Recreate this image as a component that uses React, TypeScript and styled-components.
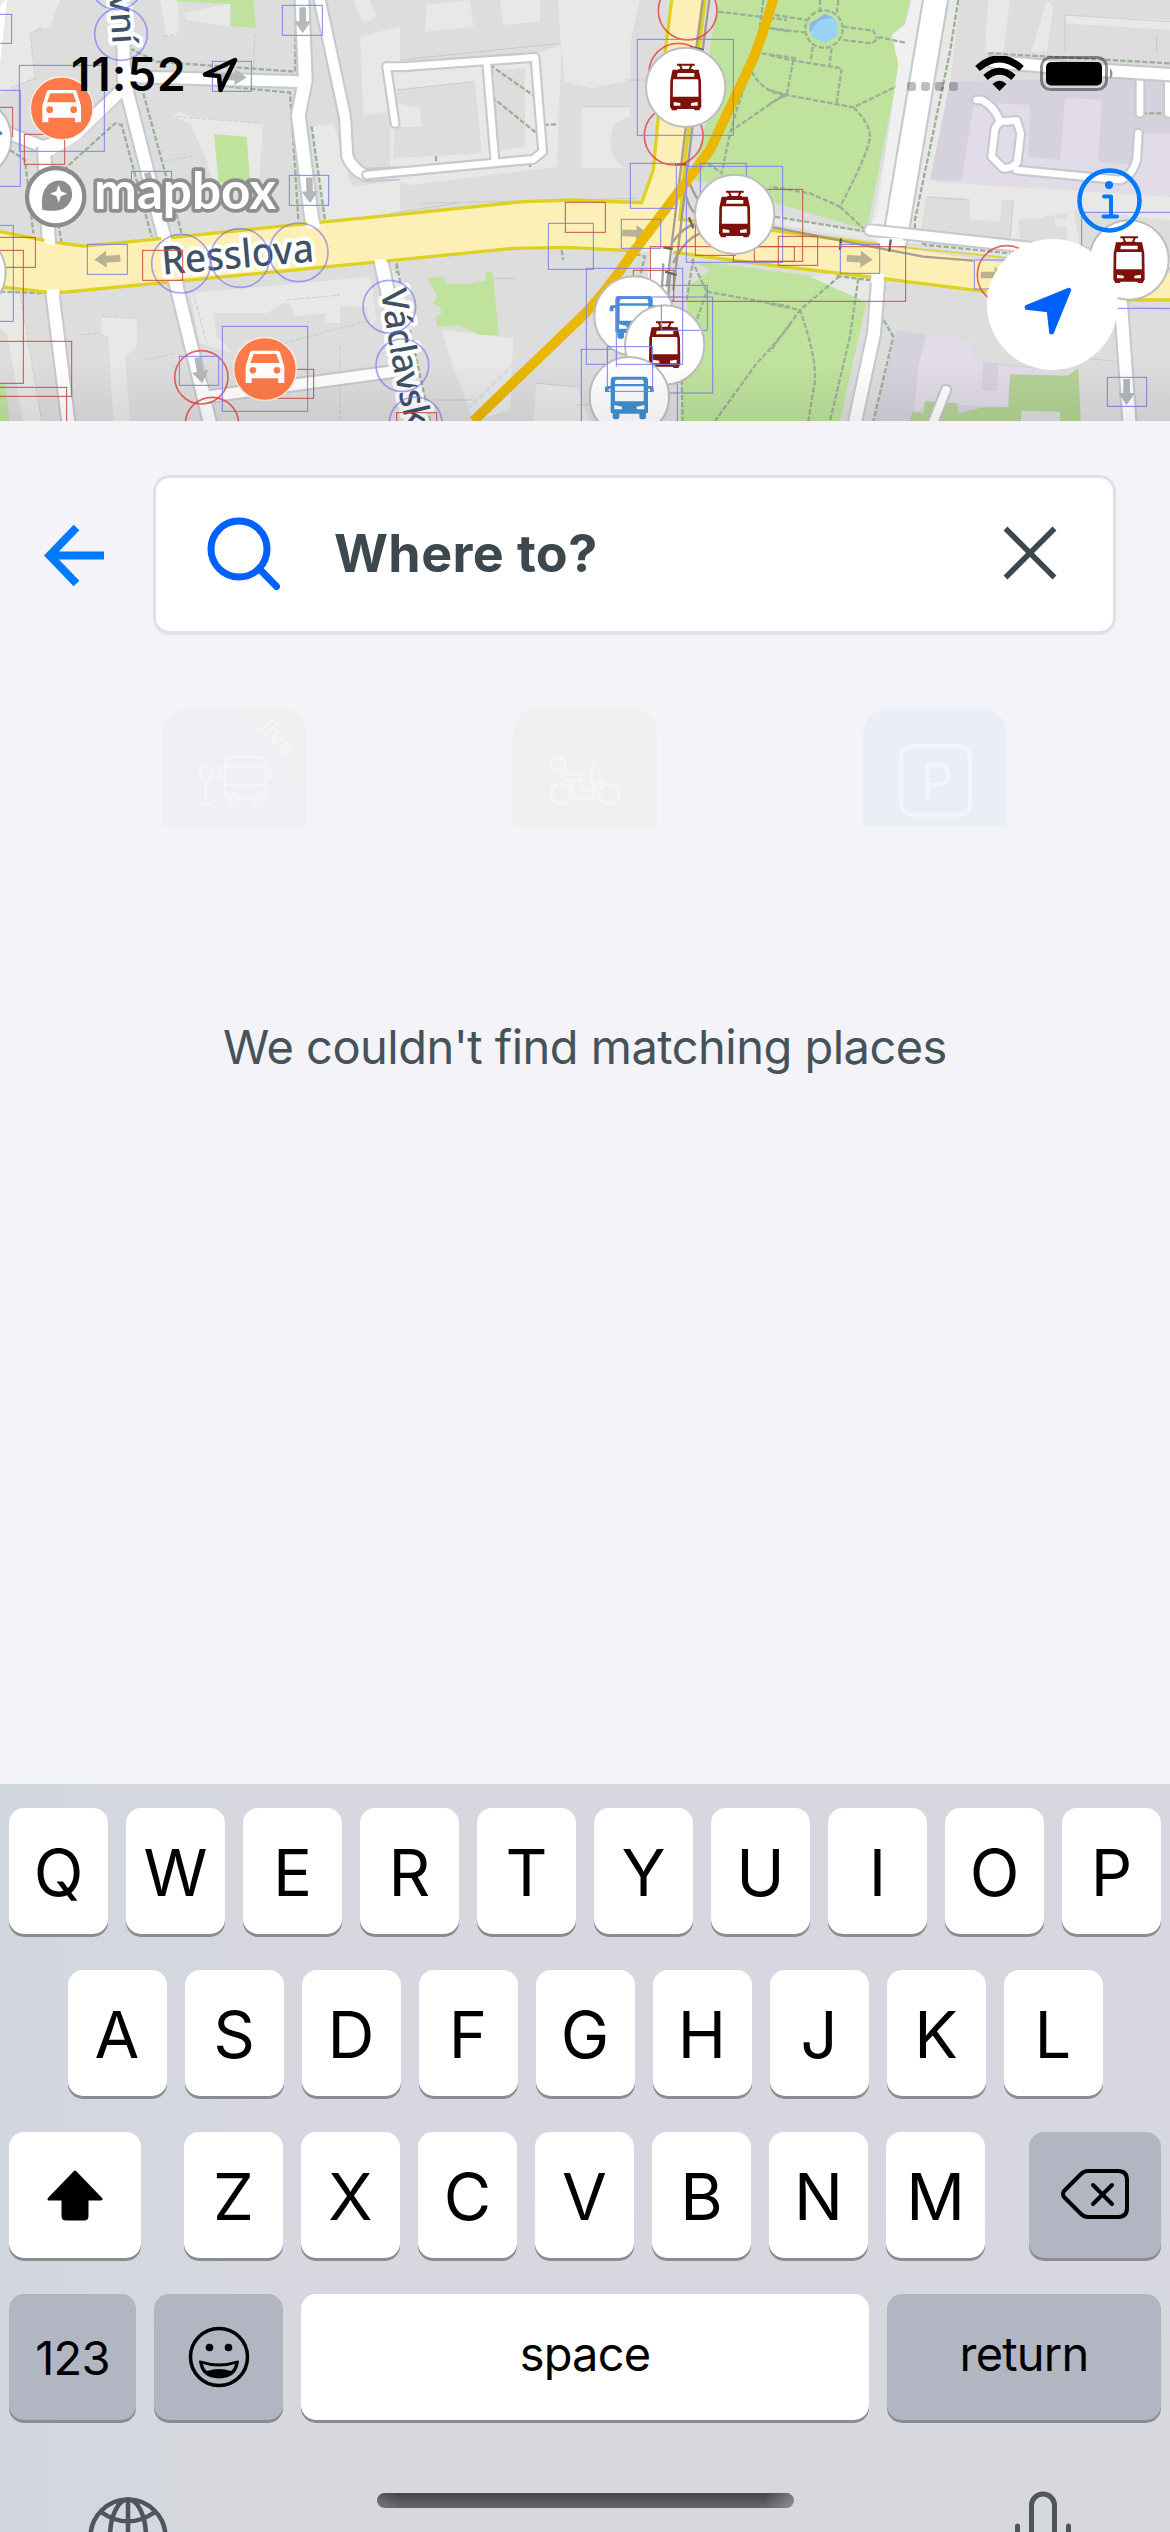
import React from "react";
import styled, { createGlobalStyle } from "styled-components";

const Global = createGlobalStyle`
  * { box-sizing: border-box; }
  html, body { margin: 0; padding: 0; background: #f3f3f8; }
  button { border: 0; padding: 0; margin: 0; background: none; font: inherit; color: inherit; }
  svg { display: block; flex: none; }
`;

const Screen = styled.div`
  width: 1170px;
  height: 2532px;
  overflow: hidden;
  display: flex;
  flex-direction: column;
  background: #f3f3f8;
  font-family: Inter, "Liberation Sans", sans-serif;
`;

/* ---------- Map ---------- */

const MapArea = styled.section`
  position: relative;
  height: 421px;
  flex: none;
  overflow: hidden;
  background: #dddddd;
`;

const StatusBar = styled.header`
  position: absolute;
  inset: 0 0 auto 0;
  height: 148px;
  padding: 0 54px 0 71px;
  display: flex;
  justify-content: space-between;
  align-items: center;
  color: #000;
`;

const StatusGroup = styled.div<{ $gap: number }>`
  display: flex;
  align-items: center;
  gap: ${(p) => p.$gap}px;
`;

const Clock = styled.span`
  font-size: 46px;
  font-weight: 600;
  line-height: 46px;
  letter-spacing: 0.9px;
`;

const Signal = styled.div`
  display: flex;
  gap: 5px;
  margin: 25px 13px 0 0;
`;

const SignalDot = styled.i`
  width: 9px;
  height: 9px;
  border-radius: 3px;
  background: rgba(60, 60, 60, 0.34);
`;

const InfoButton = styled.button`
  position: absolute;
  left: 1077px;
  top: 168px;
`;

const LocateButton = styled.button`
  position: absolute;
  left: 987px;
  top: 239px;
  width: 131px;
  height: 131px;
  border-radius: 50%;
  background: #fff;
  display: flex;
  align-items: center;
  justify-content: center;
`;

type Pt = { x: number; y: number };

const Tram = ({ x, y }: Pt) => (
  <g transform={`translate(${x} ${y})`}>
    <circle r="119" fill="#fff" stroke="#bdbdbd" strokeWidth="6" />
    <g stroke="#7d120b" fill="none" strokeWidth="7">
      <path d="M-26 -68H27M-18 -68L-11 -52M18 -68L11 -52M-22 -52H22" strokeWidth="6" />
      <path d="M-36 -49H36L42 -20L43 55H-43L-42 -20Z" strokeWidth="8" />
    </g>
    <path d="M-37 -52H37L42 -24H-42ZM-45 28H45V62Q45 65 41 65H-41Q-45 65 -45 62Z" fill="#7d120b" />
    <path d="M-24 -43H26V-32H-26Z" fill="#fff" />
    <path d="M-36 44L-16 47V55H-36ZM36 44L16 47V55H36Z" fill="#fff" />
    <path d="M-42 64H-26V69H-42ZM26 64H42V69H26Z" fill="#7d120b" />
  </g>
);

const Bus = ({ x, y }: Pt) => (
  <g transform={`translate(${x} ${y})`}>
    <circle r="119" fill="#fff" stroke="#bdbdbd" strokeWidth="6" />
    <path
      d="M-46 -60H46Q56 -60 56 -49V-32H66Q73 -32 73 -25V-14H62V-24H56V49H50V62Q50 68 43 68H36Q30 68 30 62V51H-30V62Q-30 68 -37 68H-43Q-50 68 -50 62V49H-56V-24H-62V-14H-73V-25Q-73 -32 -66 -32H-56V-49Q-56 -60 -46 -60Z"
      fill="#408fd2"
    />
    <path d="M-36 -51H36Q43 -51 43 -44V-38H-43V-44Q-43 -51 -36 -51ZM-43 -31H43V14H-43ZM-45 25L-22 30V38H-45ZM45 25L22 30V38H45Z" fill="#fff" />
  </g>
);

const Car = ({ x, y }: Pt) => (
  <g transform={`translate(${x} ${y})`}>
    <circle r="94" fill="#ff7a48" stroke="#f7efe9" strokeWidth="4" />
    <path
      d="M-38 -55H38Q43 -55 45 -50L56 -14Q58 -11 58 -6V42H40V28H-40V42H-58V-6Q-58 -11 -56 -14L-45 -50Q-43 -55 -38 -55Z"
      fill="#fff"
    />
    <path d="M-34 -45H34L44 -18H-44Z" fill="#ff7a48" />
    <circle cx="-36" cy="4" r="10" fill="#ff7a48" />
    <circle cx="36" cy="4" r="10" fill="#ff7a48" />
  </g>
);

const Arrow = ({ x, y, r = 0, c = "#b5b8ba" }: Pt & { r?: number; c?: string }) => (
  <path transform={`translate(${x} ${y}) rotate(${r})`} d="M-38 -10H4V-25L40 0L4 25V10H-38Z" fill={c} />
);

const Road = ({ d, w = 26 }: { d: string; w?: number }) => (
  <>
    <path d={d} stroke="#c6cacf" strokeWidth={w + 13} />
    <path d={d} stroke="#fff" strokeWidth={w} />
  </>
);

const Boxes = ({ items, color }: { items: number[][]; color: string }) => (
  <g fill="none" stroke={color} strokeWidth="3">
    {items.map(([x, y, w, h]) => (
      <rect key={`${x}-${y}`} x={x} y={y} width={w} height={h} />
    ))}
  </g>
);

const MID = "translate(1170 0)";
const EAST = "translate(2310 0)";
const LABEL = '"Noto Sans", "Open Sans", sans-serif';

const CityMap = () => (
  <svg width="1170" height="421" viewBox="0 0 3510 1263">
    <defs>
      <linearGradient id="foot" x1="0" y1="0" x2="0" y2="1">
        <stop offset="0" stopColor="#000" stopOpacity="0" />
        <stop offset="1" stopColor="#000" stopOpacity="0.07" />
      </linearGradient>
      <path id="vaclav" d="M1142 872L1170 1050Q1186 1140 1222 1290" />
    </defs>
    <rect width="3510" height="1263" fill="#dddddd" />

    {/* open ground between the buildings */}
    <g fill="#e8e8e6">
      <path d="M0 0H130L120 80L90 100L105 230L30 270L0 280ZM480 0H535V108H500ZM550 40L690 10V80L560 60ZM1060 0H1110L1130 50L1090 70ZM935 380L1000 370L1055 560L1200 540V640L970 660ZM1080 110L1200 80V330L1090 345Z" />
      <path d="M520 350L540 335L570 350L790 370L775 560L640 550L620 480L600 440L570 370ZM130 0H180L150 80L120 90Z" />
      <path d="M305 950L410 955V1040L375 1070L390 1263H340L325 1010L305 1000ZM570 880L1110 830L1130 960L1110 980L1100 920L850 910L800 940L640 940L650 1010L700 1060L600 1030ZM860 895L1020 885V970H975V940L885 948ZM0 870H60L125 1263H70L20 1000L0 985Z" />
      <g transform={MID}>
        <path d="M110 15L240 0L250 80L105 95ZM330 0H450V65L340 75ZM505 0H750L720 130V240L675 250L605 265L525 245L510 100ZM0 195L450 155L515 135L500 500L60 555L0 540ZM575 320H720V350Q660 360 660 430Q670 500 720 505L575 505ZM155 990L370 1015L360 1230L250 1263L190 1100ZM440 1150L560 1160L600 1263H430ZM0 810L30 815L120 1263H60Z" />
      </g>
      <g transform={EAST}>
        <path d="M655 0H720L700 155H645ZM830 0L850 20L830 155H785ZM885 45L1200 60V90L885 70ZM480 540L1200 580V820L700 750L435 720ZM0 640L300 700L430 0H570L480 740L1200 830V790L560 740L290 720L0 670Z" />
      </g>
    </g>
    <g fill="#dddddd">
      <g transform={MID}>
        <path d="M20 270L255 245L275 460L10 475ZM305 210L405 205V440L330 450Z" />
        <path d="M20 310L90 325L95 380L20 380Z" fill="#e8e8e6" />
      </g>
      <g transform={EAST}>
        <path d="M470 590L730 600L720 715L450 700ZM745 660L890 640V740L750 730ZM910 630L1200 660V780L930 740Z" />
        <path d="M600 585L695 595L690 665L600 658ZM780 590L810 585L825 650L790 660L765 645ZM855 655L900 662V682L855 678Z" fill="#e8e8e6" />
      </g>
    </g>
    <g stroke="#bfbfbf" strokeWidth="2" fill="none">
      <path d="M490 110L535 100M765 100L760 210M130 85L90 100L105 235L30 265M530 350L785 370M490 485L590 465M60 880L125 1263M305 950L410 955M240 1005L300 998M435 1080L525 1060M580 880L620 1030M860 900L1020 885M850 1030L1110 960M1020 1040V1263" strokeDasharray="14 5" />
      <path transform={MID} d="M30 180L510 130M20 270L250 245M575 320H720M710 240H770M90 610L740 595M0 640L200 610M130 1200H250M440 1150L560 1160M560 1215H600M310 835H375" />
      <path transform={EAST} d="M885 45L1200 65M885 45V155M470 590L590 600M730 600L720 715M1160 105V160M1090 920L1200 930M900 1070L1040 1085" />
    </g>

    {/* university quarter */}
    <g transform={EAST}>
      <path d="M540 245L1100 230L1200 250V590L480 540Z" fill="#d5d2de" />
      <path d="M615 300L690 310L780 315L775 470L870 480L885 295L995 300L985 485L1095 495V400H1200V590L480 545L575 540L605 350Z" fill="#e1dce7" />
      <path d="M380 990L440 1000L475 1003L610 1025L605 1080L720 1095L900 1110L720 1125V1263H310Z" fill="#d5d2de" />
      <path d="M470 1003L610 1023L605 1075L640 1085L635 1170L680 1172L685 1095L900 1115L720 1123L715 1220L560 1215L465 1205L430 1263L445 1100Z" fill="#e1dce7" />
    </g>

    {/* parks */}
    <g fill="#bfe39d">
      <path d="M530 0H760L768 85L692 78V12L530 4ZM642 402L740 410L751 552L656 548ZM0 1150H15L30 1263H0Z" />
      <g transform={MID}>
        <path d="M985 0H1560L1545 70L1505 105L1530 190L1430 690L940 545L900 540L960 330L960 140Z" />
        <path d="M900 780L1290 830L1430 905L1350 1263H870L895 860L960 810Z" />
        <path d="M112 835L162 830L165 850L240 852L287 840V818L308 816L327 1005H268L205 975L142 982L137 950L155 940L150 920L127 912L143 890Z" />
      </g>
      <g transform={EAST}>
        <path d="M720 1123L893 1127L925 1105L932 1263H870V1235L755 1232L752 1263H418L428 1235L460 1240L467 1203L560 1210L565 1240L640 1222H715Z" fill="#b4d396" />
      </g>
    </g>
    <g transform={EAST}>
      <path d="M425 0L405 75L365 105L385 190L320 650L285 690L330 735L465 0Z" fill="#f0f0f0" />
      <path d="M120 70L165 42L200 60L205 105L165 130L125 110Z" fill="#9ad2f3" />
      <path d="M120 100L118 72L165 42L190 52L150 60L130 80Z" fill="#8cb6ea" />
      <path d="M120 830L285 905L340 840L200 820Z" fill="#e8e8e6" />
    </g>

    {/* footpaths */}
    <g fill="none" stroke="#9bb098" strokeWidth="7" strokeDasharray="16 6">
      <path d="M390 145L470 185L885 215L888 0M430 270L480 240L870 278L880 420L895 660M935 380L975 660M430 280L545 700M30 450L75 480L100 700M190 510L345 370L365 375L455 710M175 670L185 730M0 875L140 880M1190 790V820" />
      <g transform={MID}>
        <path d="M300 195L435 290M305 290L440 400M460 375L502 373M138 468V498M420 485V502M20 790L35 870M60 990L120 1263M515 750L520 780M715 755L765 770L750 830M910 775L890 900M985 35L1190 60M1115 80L1200 95M1115 160L1220 175M1120 0L1100 150L1040 330L1020 400L995 520L940 480M1085 215Q1120 280 1190 285M1020 395L1180 285M905 780L950 875L915 975M950 875L1200 920M1200 975Q1130 1060 1100 1090L975 1263M875 1140L878 1263" />
      </g>
      <g transform={EAST}>
        <path d="M15 45L110 60M5 85L110 98M150 0V35M205 0L200 40M0 165L60 180L215 205L200 310M70 180L50 285L0 310M0 270L50 285L250 322L378 260M250 322Q300 370 300 410Q295 460 210 620L120 580L0 560M210 620L290 695M128 140L122 185M185 145L178 195M220 80L310 92L320 115M220 120L305 130L330 112L405 128" />
        <circle cx="162" cy="87" r="56" />
        <path d="M15 650L290 695M210 828L90 930L0 1055M0 912L90 930Q150 1100 130 1170L115 1263M265 835L240 1010L180 1263M200 828L300 840L345 845L335 950L370 1010L310 1263M565 0L540 155L435 660Q430 725 470 735L720 760M655 160L1200 190M760 210L1200 240M1100 240L1105 340H1200" />
      </g>
    </g>
    <g transform={MID} fill="none" stroke="#d7dde3" strokeWidth="9" strokeDasharray="18 8">
      <path d="M530 750L480 1050M500 880L620 890M530 770H640L720 740M690 780L230 1230M640 840L560 1080M480 1065L570 1072M765 490L740 610" />
    </g>

    {/* side streets */}
    <g fill="none" strokeLinejoin="round">
      <Road w={32} d="M0 390L130 440L220 405L370 265L385 230L905 245" />
      <Road w={36} d="M370 120L372 240L500 740" />
      <Road w={36} d="M132 440L148 760" />
      <path d="M130 425L145 455L225 410L370 270L390 235L372 200" stroke="#fff" strokeWidth="28" />
      <Road w={38} d="M905 -20L916 240L895 345L938 680" />
      <path d="M860 243L912 246" stroke="#fff" strokeWidth="32" />
      <Road w={30} d="M955 -20L1035 350L1042 470Q1060 510 1095 525L1200 520" />
      <Road w={36} d="M155 860L208 1290" />
      <Road w={36} d="M525 840L635 1290" />
      <Road w={32} d="M620 1190L1215 1110" />
      <path d="M602 1150L616 1200" stroke="#fff" strokeWidth="36" />
      <Road w={38} d="M1140 770L1190 1000L1240 1290" />
      <path d="M0 20L22 -10L0 190Z" fill="#fff" />
      <g strokeLinecap="round">
        <Road w={20} d="M1185 370L1160 200H1210L1605 172L1628 455L1600 478L1100 525M1460 185L1485 485" />
      </g>
    </g>
    <g transform={EAST} fill="none" strokeLinejoin="round" strokeLinecap="round">
      <Road w={68} d="M500 -20L375 720" />
      <Road w={36} d="M325 835L312 1000L250 1290" />
      <Road w={36} d="M1050 870L1080 1290" />
      <Road w={20} d="M620 300H635Q675 320 690 365L740 362L752 400L742 485Q730 505 700 505L665 470L675 385L690 365M740 510L1050 540Q1085 530 1100 480L1105 400M1110 340V235M1195 240V340" />
      <Road w={24} d="M528 1170L480 1290" />
      <Road w={34} d="M670 185L900 205L1220 225" />
      <Road w={28} d="M300 690L1220 790" />
    </g>

    {/* Resslova and its northern branch */}
    <path
      d="M0 695L165 727L250 738L370 727L520 712L830 680L1200 643L1570 605L1720 600L1925 608L1960 510L1975 350L1995 160L2015 0H2115L2095 160L2055 480L2040 658L2310 690L2640 735L3010 790L3510 820V905L2960 875L2620 832L2310 795L2020 757L1890 752L1700 742L1540 745L1170 782L520 845L200 876L145 877L0 860Z"
      fill="#fdf0b7"
    />
    <g fill="none" stroke="#dfd11f" strokeWidth="10">
      <path d="M0 695L165 727L250 738L370 727L520 712L830 680L1200 643L1570 605L1720 600L1925 608L1960 510L1975 350L1995 160L2015 0M2115 0L2095 160L2055 480L2040 658L2310 690L2640 735" />
      <path d="M0 860L145 877L200 876L520 845L1170 782L1540 745L1700 742L1890 752M2020 757L2310 795L2620 832L2960 875M3380 900H3510" />
      <path d="M2640 735L3040 775" strokeWidth="4" />
    </g>
    <path d="M133 705H163L166 735L133 728ZM483 700L508 695L514 722L484 724ZM920 660H957L960 682L922 686ZM140 868H178V890H142ZM505 842H548V860H512ZM1122 778H1158L1163 796H1127ZM1950 745L2018 750L1995 900H1940ZM2615 822H2652L2650 850H2612ZM2640 715H2710L2705 740H2638Z" fill="#fff" />

    {/* tram tracks */}
    <g transform={MID} fill="none" stroke="#9a9188" strokeWidth="7" opacity="0.85">
      <path d="M938 0L885 400L830 860M958 0L905 400L850 870M895 540Q910 580 925 600M890 590Q895 620 915 640M845 730Q880 680 915 672M850 790Q880 720 930 700M820 790L815 880M1140 680L1470 745L1600 770L1750 782M840 820L835 890" />
      <path d="M900 140L940 150M855 493H890M897 652L910 685M820 742L848 747M825 815L860 825M1353 715L1350 750M1502 718L1498 755" stroke="#4c4c4c" />
    </g>

    <Arrow x={323} y={777} r={177} c="#b9b18f" />
    <Arrow x={1905} y={700} r={2} c="#b9b18f" />
    <Arrow x={2578} y={777} r={3} c="#b9b18f" />
    <Arrow x={2980} y={825} c="#b9b18f" />
    <Arrow x={700} y={231} r={2} />
    <Arrow x={908} y={60} r={90} />
    <Arrow x={929} y={570} r={88} />
    <Arrow x={450} y={555} r={78} />
    <Arrow x={600} y={1110} r={80} />
    <Arrow x={3380} y={1175} r={90} />

    {/* metro line */}
    <path d="M2322 -10Q2290 100 2258 180L2130 450L1890 770Q1800 900 1730 965L1420 1263" fill="none" stroke="#eab800" strokeWidth="30" />

    {/* street names */}
    <g fontFamily={LABEL} fill="#3f5265" stroke="#fff" strokeWidth="24" strokeLinejoin="round" style={{ paintOrder: "stroke" }} fontWeight="500">
      <text transform="translate(488 824) rotate(-5)" fontSize="118" textLength="458" lengthAdjust="spacingAndGlyphs">Resslova</text>
      <text fontSize="108" letterSpacing="-3"><textPath href="#vaclav">Václavsk</textPath></text>
      <text transform="translate(338 133) rotate(86)" fontSize="104" textAnchor="end">vní</text>
    </g>

    {/* label collision shapes */}
    <g fill="none" stroke="#6e6ef5" strokeOpacity="0.6" strokeWidth="5">
      <circle cx="363" cy="102" r="79" />
      <circle cx="350" cy="-50" r="79" />
      <circle cx="543" cy="791" r="88" />
      <circle cx="720" cy="774" r="88" />
      <circle cx="896" cy="757" r="88" />
      <circle cx="1168" cy="920" r="79" />
      <circle cx="1207" cy="1096" r="79" />
      <circle cx="1247" cy="1270" r="79" />
    </g>
    <g fill="none" stroke="#e93e3e" strokeOpacity="0.8" strokeWidth="5">
      <circle cx="604" cy="1132" r="80" />
      <circle cx="636" cy="1272" r="80" />
      <circle cx="2063" cy="32" r="88" />
      <circle cx="2035" cy="218" r="88" />
      <circle cx="2021" cy="407" r="88" />
      <circle cx="3020" cy="825" r="88" />
    </g>
    <Boxes
      color="#8180ee"
      items={[
        [-10, 43, 45, 87], [-10, 271, 71, 288], [58, 196, 255, 258], [637, 184, 117, 90], [847, 16, 120, 90],
        [394, 514, 121, 90], [868, 526, 118, 90], [262, 733, 120, 90], [-10, 676, 50, 288], [538, 1069, 118, 87], [667, 979, 256, 255],
        [1912, 118, 288, 288], [1891, 490, 138, 135], [2101, 490, 138, 135], [2059, 499, 289, 288], [1645, 670, 135, 138],
        [1864, 658, 118, 87], [1759, 805, 289, 288], [1984, 856, 138, 135], [1849, 891, 289, 288], [1744, 1048, 288, 260],
        [1822, 1040, 136, 134], [2521, 733, 118, 87], [2923, 780, 118, 87], [3245, 637, 290, 288], [3322, 1132, 118, 87],
      ]}
    />
    <Boxes
      color="#c9514f"
      items={[
        [-10, 322, 48, 88], [73, 403, 121, 90], [-10, 712, 116, 90], [-10, 751, 80, 399], [-10, 1024, 225, 165], [-10, 1162, 210, 130],
        [428, 751, 120, 90], [820, 1108, 121, 87], [1190, 1238, 120, 80], [1696, 607, 120, 90], [1900, 811, 121, 90],
        [2086, 676, 120, 90], [2263, 740, 120, 44], [2335, 709, 118, 87], [1951, 740, 766, 164], [2200, 568, 208, 216],
      ]}
    />

    <circle cx="-85" cy="415" r="119" fill="#fff" stroke="#bdbdbd" strokeWidth="6" />
    <circle cx="1" cy="400" r="6" fill="#408fd2" />
    <circle cx="-102" cy="818" r="119" fill="#fff" stroke="#bdbdbd" strokeWidth="6" />
    <Car x={185} y={325} />
    <Car x={795} y={1107} />
    <Tram x={2057} y={262} />
    <Tram x={2204} y={643} />
    <Bus x={1902} y={948} />
    <Tram x={1994} y={1035} />
    <Bus x={1888} y={1190} />
    <Tram x={3387} y={780} />
    <path d="M1822 1174V1040H1958V1174ZM1849 1100V891H2048V1093H1850M1984 915V991H2100" fill="none" stroke="#8180ee" strokeWidth="3" />

    {/* mapbox wordmark */}
    <circle cx="167" cy="590" r="86" fill="#fff" stroke="#8b8b8b" strokeWidth="13" />
    <path d="M127 630Q120 580 143 556Q166 535 195 545Q220 560 216 590Q207 628 165 632Q140 633 127 630Z" fill="#8c8c8c" />
    <path d="M176 554L183 574L202 581L183 588L176 608L169 588L150 581L169 574Z" fill="#fff" />
    <text
      x="282" y="628" fontFamily="Lato, Inter, sans-serif" fontWeight="700" fontSize="152" fill="#fff" stroke="#8f8f8f"
      strokeWidth="22" strokeLinejoin="round" style={{ paintOrder: "stroke" }} textLength="546" lengthAdjust="spacingAndGlyphs"
    >
      mapbox
    </text>
    <rect y="1080" width="3510" height="183" fill="url(#foot)" />
  </svg>
);

/* ---------- Search panel ---------- */

const Panel = styled.main`
  height: 1363px;
  flex: none;
  padding-top: 54px;
  display: flex;
  flex-direction: column;
`;

const SearchRow = styled.div`
  display: flex;
  align-items: center;
  gap: 49px;
  padding: 0 54px 0 44px;
`;

const SearchBox = styled.div`
  flex: 1;
  height: 160px;
  display: flex;
  align-items: center;
  padding: 0 56px 4px 49px;
  background: #fff;
  border: 3px solid #dee1e7;
  border-bottom-width: 4px;
  border-radius: 17px;
`;

const SearchText = styled.span`
  flex: 1;
  margin: 3px 0 0 53px;
  font-size: 52px;
  font-weight: 700;
  letter-spacing: 0.4px;
  line-height: 60px;
  color: #3c474e;
`;

const Tiles = styled.div`
  display: flex;
  gap: 206px;
  height: 118px;
  margin-top: 73px;
  padding-left: 163px;
  overflow: hidden;
`;

const Tile = styled.div<{ $bg: string }>`
  width: 144px;
  height: 144px;
  flex: none;
  overflow: hidden;
  border-radius: 26px;
  background: ${(p) => p.$bg};
`;

const Message = styled.p`
  margin: 191px 0 0;
  text-align: center;
  font-size: 47px;
  line-height: 60px;
  letter-spacing: -0.52px;
  color: #46525a;
`;

/* ---------- Keyboard ---------- */

const Keyboard = styled.section`
  flex: 1;
  padding-top: 24px;
  display: flex;
  flex-direction: column;
  overflow: hidden;
  background: linear-gradient(90deg, rgba(209, 215, 223, 0.9), rgba(209, 215, 223, 0) 22%),
    linear-gradient(180deg, #d6d7df 0%, #d6d7e0 55%, #d7d8dd 85%);
`;

const KeyRow = styled.div`
  display: flex;
  justify-content: center;
  gap: 18px;
  margin-bottom: 36px;
`;

const Key = styled.button<{ $w?: number; $dark?: boolean; $l?: number; $r?: number }>`
  width: ${(p) => p.$w ?? 99}px;
  height: 126px;
  flex: none;
  margin: 0 ${(p) => p.$r ?? 0}px 0 ${(p) => p.$l ?? 0}px;
  display: flex;
  align-items: center;
  justify-content: center;
  border-radius: 15px;
  background: ${(p) => (p.$dark ? "#b2b5c2" : "#fff")};
  box-shadow: 0 3px 0 #8b8c91;
  color: #000;
`;

const LetterKey = styled(Key)`
  padding-top: 3px;
  font-size: 65px;
  line-height: 1;
`;

const WordKey = styled(Key)<{ $raise?: number }>`
  padding-bottom: ${(p) => p.$raise ?? 0}px;
  font-size: 47px;
  line-height: 1;
  letter-spacing: -0.8px;
`;

const BottomBar = styled.div`
  display: grid;
  grid-template-columns: 289px 638px 56px;
  align-items: start;
  padding: 35px 0 0 88px;
`;

const HomeIndicator = styled.div`
  width: 417px;
  height: 15px;
  margin-top: 2px;
  border-radius: 8px;
  background: linear-gradient(90deg, rgba(255, 255, 255, 0.12), transparent 5%, transparent 93%, rgba(255, 255, 255, 0.28)),
    linear-gradient(#444547, #67686c);
`;

const Lowered = styled.div<{ $y: number }>`
  margin-top: ${(p) => p.$y}px;
`;

const faint = { fill: "none", stroke: "#f4f4f9", strokeWidth: 3 };

const letters = (row: string) => row.split("").map((k) => <LetterKey key={k}>{k}</LetterKey>);

export default function App() {
  return (
    <>
      <Global />
      <Screen>
        <MapArea>
          <CityMap />
          <StatusBar>
            <StatusGroup $gap={15}>
              <Clock>11:52</Clock>
              <svg width="37" height="37" viewBox="0 0 37 37">
                <path d="M33 4L3 18.5L17 20L18.500 34Z" fill="none" stroke="#000" strokeWidth="4.500" strokeLinejoin="round" />
              </svg>
            </StatusGroup>
            <StatusGroup $gap={4}>
              <Signal>
                <SignalDot /><SignalDot /><SignalDot /><SignalDot />
              </Signal>
              <svg width="49" height="36" viewBox="0 0 49 36">
                <path d="M2.500 12.500Q24.500 -7 46.500 12.500" fill="none" stroke="#000" strokeWidth="7" />
                <path d="M10.500 21.500Q24.500 9 38.500 21.500" fill="none" stroke="#000" strokeWidth="6.500" />
                <path d="M24.500 35L17.500 28Q24.500 21.500 31.500 28Z" fill="#000" />
              </svg>
              <svg width="76" height="36" viewBox="0 0 76 36" style={{ marginLeft: 12 }}>
                <rect x="1.500" y="1.500" width="65" height="32" rx="9" fill="none" stroke="#000" strokeOpacity="0.42" strokeWidth="3" />
                <rect x="6" y="6" width="56" height="23.500" rx="5" fill="#000" />
                <path d="M70 12Q75 17.500 70 23Z" fill="#000" fillOpacity="0.42" />
              </svg>
            </StatusGroup>
          </StatusBar>
          <LocateButton aria-label="Locate">
            <svg width="48" height="48" viewBox="0 0 48 48" style={{ marginTop: 12, marginRight: 9 }}>
              <path d="M45 2L2 19.500V21.500L24 24L26.500 46H28.500L46 3Z" fill="#0061ff" stroke="#0061ff" strokeWidth="2.500" strokeLinejoin="round" />
            </svg>
          </LocateButton>
          <InfoButton aria-label="Information">
            <svg width="65" height="65" viewBox="0 0 65 65" fill="none" stroke="#007aff">
              <circle cx="32.500" cy="32.500" r="30" strokeWidth="4.500" />
              <circle cx="32" cy="17" r="4" fill="#007aff" stroke="none" />
              <path d="M27 28.500H34V48M26.500 48.500H40" strokeWidth="4" strokeLinecap="round" strokeLinejoin="round" />
            </svg>
          </InfoButton>
        </MapArea>

        <Panel>
          <SearchRow>
            <svg width="60" height="70" viewBox="0 0 60 70" fill="none" stroke="#007aff" strokeWidth="8">
              <path d="M32.500 7.500L5.500 35.500L32.500 63.500M4 35.500H60" />
            </svg>
            <SearchBox>
              <svg width="76" height="76" viewBox="0 0 76 76" fill="none" stroke="#0061ff" strokeWidth="7" strokeLinecap="round">
                <circle cx="34" cy="34" r="28" />
                <path d="M54.500 54L71.500 71.500" />
              </svg>
              <SearchText>Where to?</SearchText>
              <svg width="54" height="54" viewBox="0 0 54 54" stroke="#3c474e" strokeWidth="5.500">
                <path d="M2.500 2.500L51.500 51.500M51.500 2.500L2.500 51.500" />
              </svg>
            </SearchBox>
          </SearchRow>
          <Tiles>
            <Tile $bg="#eef0f5">
              <svg width="144" height="144" viewBox="0 0 144 144">
                <path d="M70 0H144V82Z" fill="#eff1f1" />
                <text x="95" y="20" transform="rotate(48 95 20)" fontFamily="Inter, sans-serif" fontSize="24" fontWeight="700" fill="#f4f4f9">live</text>
                <g {...faint}>
                  <rect x="62" y="49" width="41" height="41" rx="5" />
                  <path d="M62 58H103M62 77H103M66 85H74M91 85H99M67 90V96H74V90M91 90V96H98V90M62 60H57V70H60M103 60H107V70H105" />
                  <rect x="37" y="59" width="12" height="12" rx="5" />
                  <path d="M43 71V95M36 96H50" />
                </g>
              </svg>
            </Tile>
            <Tile $bg="#eff1ef">
              <svg width="144" height="144" viewBox="0 0 144 144">
                <g {...faint}>
                  <circle cx="48" cy="86" r="10" />
                  <circle cx="96" cy="86" r="10" />
                  <path d="M38 53Q46 47 52 53V61H38ZM44 66H68V72H56L62 90H80Q80 70 90 76L82 54L78 51M80 57Q76 74 80 82H72L65 72M48 66L58 76" />
                </g>
              </svg>
            </Tile>
            <Tile $bg="#ebeef6">
              <svg width="144" height="144" viewBox="0 0 144 144">
                <rect x="38" y="38" width="69" height="69" rx="12" {...faint} strokeWidth={4} />
                <text x="57.500" y="91.500" fontFamily="Inter, sans-serif" fontSize="51" fill="#f4f4f9">P</text>
              </svg>
            </Tile>
          </Tiles>
          <Message>We couldn't find matching places</Message>
        </Panel>

        <Keyboard>
          <KeyRow>{letters("QWERTYUIOP")}</KeyRow>
          <KeyRow>{letters("ASDFGHJKL")}</KeyRow>
          <KeyRow>
            <Key $w={132} $r={25} aria-label="Shift">
              <svg width="58" height="51" viewBox="0 0 58 51">
                <path d="M29 2L55 29H41V46Q41 49 38 49H20Q17 49 17 46V29H3Z" stroke="#000" strokeWidth="3" strokeLinejoin="round" />
              </svg>
            </Key>
            {letters("ZXCVBNM")}
            <Key $w={132} $l={26} $dark aria-label="Delete">
              <svg width="70" height="52" viewBox="0 0 70 52" fill="none" stroke="#000" strokeWidth="4" strokeLinejoin="round" strokeLinecap="round">
                <path d="M28 2H58Q67 2 67 11V39Q67 48 58 48H28Q24 48 21 45L4 28Q2 25 4 22L21 5Q24 2 28 2Z" />
                <path d="M33 16L52 35M52 16L33 35" />
              </svg>
            </Key>
          </KeyRow>
          <KeyRow>
            <WordKey $w={127} $dark>123</WordKey>
            <Key $w={129} $dark aria-label="Emoji">
              <svg width="62" height="62" viewBox="0 0 62 62">
                <circle cx="31" cy="31" r="28.500" fill="none" stroke="#000" strokeWidth="3.500" />
                <circle cx="21.500" cy="21.500" r="3.800" />
                <circle cx="40.500" cy="21.500" r="3.800" />
                <path d="M12 35.500Q31 41.500 50 35.500Q48 51.500 31 51.500Q14 51.500 12 35.500Z" stroke="#000" strokeWidth="2" strokeLinejoin="round" />
                <path d="M15 38Q31 43 47 38Q46 43 43 45Q31 41 19 45Q16 43 15 38Z" fill="#b2b5c2" />
              </svg>
            </Key>
            <WordKey $w={568} $raise={8}>space</WordKey>
            <WordKey $w={274} $raise={8} $dark>return</WordKey>
          </KeyRow>
          <BottomBar>
            <Lowered $y={6}>
              <svg width="80" height="80" viewBox="0 0 80 80" fill="none" stroke="#50555c" strokeWidth="4.500">
                <circle cx="40" cy="40" r="37.500" />
                <ellipse cx="40" cy="40" rx="18" ry="37.500" />
                <path d="M40 2V78M2 40H78M13 15Q40 34 67 15M13 65Q40 46 67 65" />
              </svg>
            </Lowered>
            <HomeIndicator />
            <svg width="56" height="90" viewBox="0 0 56 90" fill="none" stroke="#50555c" strokeWidth="5" strokeLinecap="round">
              <rect x="16.500" y="3" width="23" height="54" rx="11.500" />
              <path d="M2.500 35V46Q4 66 28 68Q52 66 53.500 46V35" />
            </svg>
          </BottomBar>
        </Keyboard>
      </Screen>
    </>
  );
}
